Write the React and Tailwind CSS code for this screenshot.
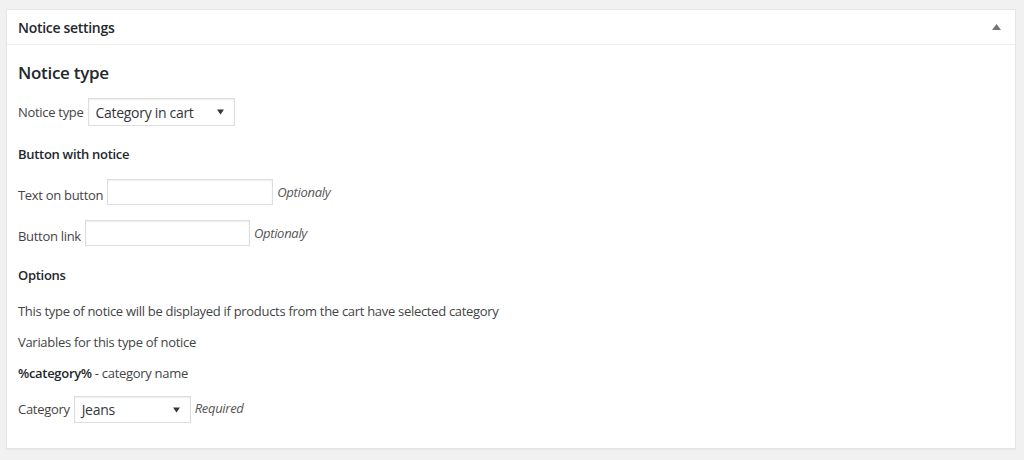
import React from "react";

const Tri = ({ className = "" }) => (
  <svg width="7" height="6" viewBox="0 0 7 6" className={className}>
    <path d="M0 0.5 L7 0.5 L3.5 5.5 Z" fill="#32373c" />
  </svg>
);

function Select({ value, w, h }) {
  return (
    <div
      className={`flex items-center justify-between border border-[#ddd] bg-white pl-[7px] pr-[10px] shadow-[inset_0_1px_2px_rgba(0,0,0,0.07)] text-[14px] text-[#32373c] ${w} ${h}`}
    >
      <span>{value}</span>
      <Tri />
    </div>
  );
}

function Input({ w }) {
  return (
    <div
      className={`border border-[#ddd] bg-white shadow-[inset_0_1px_2px_rgba(0,0,0,0.07)] h-[26px] ${w}`}
    />
  );
}

export default function App() {
  return (
    <div
      className="w-[1024px] h-[460px] bg-[#f1f1f1] pt-[9px] pl-[6px] pr-[8px] text-[13px] text-[#444] tracking-[-0.3px]"
      style={{ fontFamily: '"Open Sans", "Noto Sans", sans-serif' }}
    >
      <div className="h-[440px] border border-[#e5e5e5] bg-white shadow-[0_1px_1px_rgba(0,0,0,0.04)]">
        <div className="flex h-[35px] items-center justify-between border-b border-[#eee] pl-[11px] pr-[14px]">
          <span className="text-[14px] font-semibold text-[#23282d]">Notice settings</span>
          <svg width="9" height="6" viewBox="0 0 9 6">
            <path d="M0 6 L9 6 L4.5 0 Z" fill="#72777c" />
          </svg>
        </div>
        <div className="px-[11px]">
          <h2 className="mt-[16px] text-[17px] leading-[24px] font-semibold text-[#23282d]">
            Notice type
          </h2>
          <div className="mt-[13px] flex items-center gap-[4px]">
            <span className="mt-[2px]">Notice type</span>
            <Select value="Category in cart" w="w-[147px]" h="h-[28px]" />
          </div>
          <div className="mt-[18px] leading-[20px] font-semibold text-[#23282d]">Button with notice</div>
          <div className="mt-[15px] flex items-end gap-[4px]">
            <span className="leading-[20px]">Text on button</span>
            <Input w="w-[166px]" />
            <span className="self-center italic text-[#555] mt-[2px]">Optionaly</span>
          </div>
          <div className="mt-[15px] flex items-end gap-[4px]">
            <span className="leading-[20px]">Button link</span>
            <Input w="w-[165px]" />
            <span className="self-center italic text-[#555] mt-[2px]">Optionaly</span>
          </div>
          <div className="mt-[19px] leading-[20px] font-semibold text-[#23282d]">Options</div>
          <p className="mt-[16px] leading-[20px]">
            This type of notice will be displayed if products from the cart have selected category
          </p>
          <p className="mt-[11px] leading-[20px]">Variables for this type of notice</p>
          <p className="mt-[11px] leading-[20px]">
            <span className="font-semibold text-[#23282d]">%category%</span> - category name
          </p>
          <div className="mt-[13px] flex items-center gap-[4px]">
            <span>Category</span>
            <Select value="Jeans" w="w-[117px]" h="h-[27px]" />
            <span className="italic text-[#555] -mt-[2px]">Required</span>
          </div>
        </div>
      </div>
    </div>
  );
}
